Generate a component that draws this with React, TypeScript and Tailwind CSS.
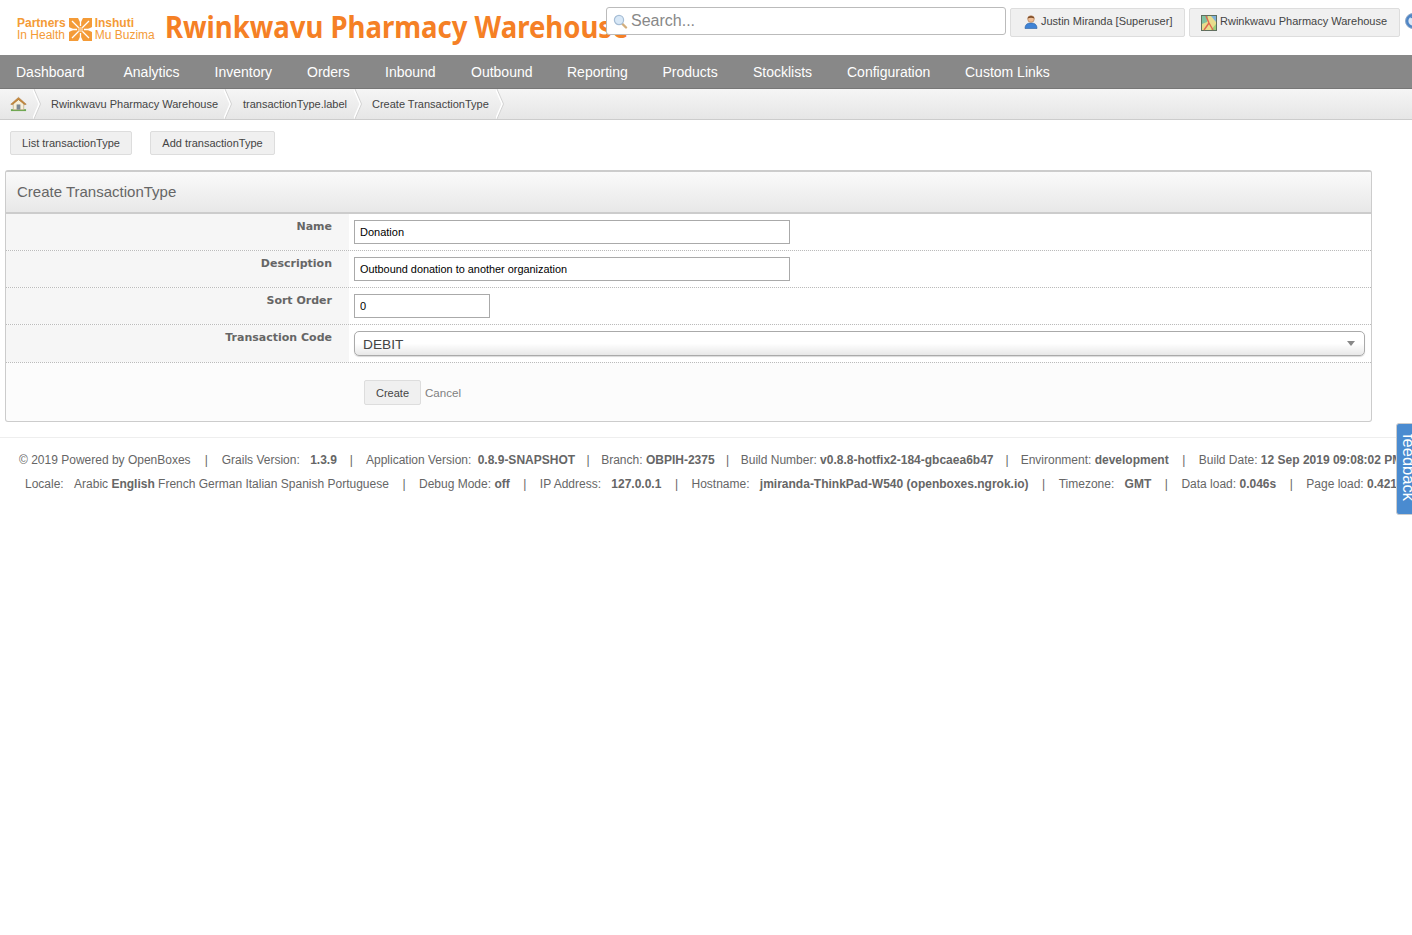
import React from 'react';

const navItems = [
  { label: 'Dashboard', width: 'w-[107.5px]' },
  { label: 'Analytics', width: 'w-[91px]' },
  { label: 'Inventory', width: 'w-[92.5px]' },
  { label: 'Orders', width: 'w-[78px]' },
  { label: 'Inbound', width: 'w-[86px]' },
  { label: 'Outbound', width: 'w-[96px]' },
  { label: 'Reporting', width: 'w-[95.5px]' },
  { label: 'Products', width: 'w-[90.5px]' },
  { label: 'Stocklists', width: 'w-[94px]' },
  { label: 'Configuration', width: 'w-[118px]' },
  { label: 'Custom Links', width: 'w-[110px]' },
];

function Chevron() {
  return (
    <svg width="10" height="30" viewBox="0 0 10 30" className="shrink-0">
      <path d="M0 0 L6.5 15 L0 30" fill="none" stroke="#fff" strokeWidth="2" />
      <path d="M1 0 L7.5 15 L1 30" fill="none" stroke="#d2d2d2" strokeWidth="1" />
    </svg>
  );
}

function HomeIcon() {
  return (
    <svg width="17" height="16" viewBox="0 0 18 16">
      <rect x="1" y="13.5" width="16" height="2" fill="#6aa84f" />
      <path d="M3.5 7 V14 H14.5 V7 L9 3 Z" fill="#f7efd9" stroke="#b9a77d" strokeWidth="0.7" />
      <path d="M0.8 8.2 L9 1 L17.2 8.2 L15.6 8.8 L9 3.4 L2.4 8.8 Z" fill="#c98a3c" stroke="#9b6424" strokeWidth="0.5" />
      <rect x="7" y="8.5" width="4" height="5.5" fill="#7c8791" />
    </svg>
  );
}

function SearchIcon() {
  return (
    <svg width="15" height="15" viewBox="0 0 15 15" className="shrink-0">
      <path d="M9 9.5 L13 13.5" stroke="#d3ae7c" strokeWidth="2.4" strokeLinecap="round" />
      <circle cx="6" cy="6" r="4.6" fill="#d8e8f7" stroke="#a6bdd5" strokeWidth="1.2" />
    </svg>
  );
}

function UserIcon() {
  return (
    <svg width="14" height="15" viewBox="0 0 14 15" className="shrink-0">
      <path d="M1 14.5 C1 10 4 9 7 9 C10 9 13 10 13 14.5 Z" fill="#3f83d6" stroke="#2a5f9f" strokeWidth="0.6" />
      <circle cx="7" cy="5" r="3.3" fill="#eebd95" stroke="#a9754d" strokeWidth="0.6" />
      <path d="M3.6 4.6 C3.6 1 10.4 1 10.4 4.6 C8.5 3.4 5.5 3.4 3.6 4.6 Z" fill="#7a4a26" />
    </svg>
  );
}

function MapIcon() {
  return (
    <svg width="16" height="16" viewBox="0 0 16 16" className="shrink-0">
      <rect x="0.5" y="0.5" width="15" height="15" fill="#e8dd8c" stroke="#5f6f5f" />
      <path d="M1 1 H7 L6 7 L1 9 Z" fill="#7fc2a0" />
      <path d="M10 1 H15 V7 Z" fill="#7fb0d8" />
      <path d="M10 15 L15 9 V15 Z" fill="#9ccf7a" />
      <path d="M5 1 L8 8 L12 15 M8 8 L3 15" stroke="#e0664f" strokeWidth="1.4" fill="none" />
    </svg>
  );
}

function GlobeIcon() {
  return (
    <svg width="16" height="16" viewBox="0 0 16 16" className="shrink-0">
      <circle cx="8" cy="8" r="7.5" fill="#4f86c6" stroke="#8fa9c9" />
      <circle cx="8" cy="8" r="4.6" fill="#dce8f5" />
      <path d="M5.5 4.5 C7.5 3.5 11 5 10 7.5 C9.2 9 7.5 8.5 8 11" fill="none" stroke="#4f86c6" strokeWidth="1.6" />
    </svg>
  );
}

function LogoMark() {
  return (
    <svg width="23" height="23" viewBox="0 0 23 23" className="shrink-0">
      <path d="M0 0 H9 L11.5 5 L14 0 H23 V9 L18 11.5 L23 14 V23 H14 L11.5 18 L9 23 H0 V14 L5 11.5 L0 9 Z" fill="#f49b37" />
      <path d="M3 3 L10 10 M20 3 L13 10 M3 20 L10 13 M20 20 L13 13 M11.5 2 V8 M11.5 15 V21 M2 11.5 H8 M15 11.5 H21" stroke="#fff" strokeWidth="1.3" />
      <circle cx="11.5" cy="11.5" r="2.6" fill="#f9c58a" />
    </svg>
  );
}

function FormRow({ label, children, tall }: { label: string; children: React.ReactNode; tall?: boolean }) {
  return (
    <div className={`flex border-b border-dotted border-[#bbb] ${tall ? 'h-[38px]' : 'h-[37px]'}`}>
      <div className="w-[343px] shrink-0 bg-[#f6f6f6] pt-[6px] pr-[17px] text-right text-[11px] leading-[14px] font-bold text-[#666]" style={{ fontFamily: '"DejaVu Sans", sans-serif' }}>
        {label}
      </div>
      <div className="flex-1 bg-white pt-[6px] pr-[6px] pl-[5px]">{children}</div>
    </div>
  );
}

// footer separators are not evenly spaced in the original
function Sep({ space = 'mx-[13.5px]' }: { space?: string }) {
  return <span className={`${space} text-[#666]`}>|</span>;
}

function Gap() {
  return <span className="inline-block w-[7px]" />;
}

export default function App() {
  return (
    <div className="relative h-[935px] w-[1412px] overflow-hidden bg-white text-[#666]" style={{ fontFamily: '"Liberation Sans", Arial, sans-serif' }}>
      {/* Header */}
      <div className="flex h-[55px] items-start">
        <div className="flex w-[165px] shrink-0 items-center pt-[17px] pl-[17px] text-[12px] leading-[12px] text-[#f49b37]">
          <div>
            <div className="font-bold">Partners</div>
            <div>In Health</div>
          </div>
          <div className="mx-[3px]">
            <LogoMark />
          </div>
          <div>
            <div className="font-bold">Inshuti</div>
            <div>Mu Buzima</div>
          </div>
        </div>
        <div className="w-[441px] shrink-0 origin-left scale-x-[0.917] pt-[6px] text-[30px] leading-[42px] font-bold whitespace-nowrap text-[#f58025]" style={{ fontFamily: '"Noto Sans", sans-serif' }}>
          Rwinkwavu Pharmacy Warehouse
        </div>
        <div className="relative mt-[7px] flex h-[28px] w-[400px] shrink-0 items-center gap-[3px] rounded-[3px] border border-[#bbb] bg-white pl-[6px] text-[16px] text-[#888]">
          <SearchIcon />
          <span>Search...</span>
        </div>
        <div className="mt-[8px] ml-[4px] flex h-[29px] w-[175px] shrink-0 items-center gap-[3px] rounded-[2px] border border-[#ddd] bg-[#f0f0f0] pb-[2px] pl-[13px] text-[11px] whitespace-nowrap text-[#444]">
          <UserIcon />
          <span>Justin Miranda [Superuser]</span>
        </div>
        <div className="mt-[8px] ml-[4px] flex h-[29px] w-[211px] shrink-0 items-center gap-[3px] rounded-[2px] border border-[#ddd] bg-[#f0f0f0] pl-[11px] text-[11px] whitespace-nowrap text-[#444]">
          <MapIcon />
          <span className="pb-[2px]">Rwinkwavu Pharmacy Warehouse</span>
        </div>
        <div className="mt-[13px] ml-[5px] shrink-0">
          <GlobeIcon />
        </div>
      </div>

      {/* Main nav */}
      <div className="flex h-[34px] items-center border-b border-[#777] bg-[#888] pt-[1px] pl-[16px] text-[14px] whitespace-nowrap text-white">
        {navItems.map((item) => (
          <div key={item.label} className={`${item.width} shrink-0`}>
            {item.label}
          </div>
        ))}
      </div>

      {/* Breadcrumb */}
      <div className="flex h-[31px] items-center border-b border-[#ccc] bg-gradient-to-b from-[#f5f5f5] to-[#e6e6e6] text-[11px] whitespace-nowrap text-[#444]">
        <div className="flex w-[33px] shrink-0 pl-[10px]">
          <HomeIcon />
        </div>
        <Chevron />
        <span className="ml-[8px] w-[173px] shrink-0">Rwinkwavu Pharmacy Warehouse</span>
        <Chevron />
        <span className="ml-[9px] w-[111px] shrink-0">transactionType.label</span>
        <Chevron />
        <span className="ml-[8px] w-[124px] shrink-0">Create TransactionType</span>
        <Chevron />
      </div>

      {/* Actions */}
      <div className="flex gap-[18px] pt-[11px] pl-[10px] text-[11px] text-[#444]">
        <div className="flex h-[24px] w-[122px] items-center justify-center rounded-[2px] border border-[#ddd] bg-[#f0f0f0]">List transactionType</div>
        <div className="flex h-[24px] w-[125px] items-center justify-center rounded-[2px] border border-[#ddd] bg-[#f0f0f0]">Add transactionType</div>
      </div>

      {/* Form panel */}
      <div className="mt-[15px] ml-[5px] h-[252px] w-[1367px] overflow-hidden rounded-[3px] border border-t-2 border-[#ccc] bg-[#fcfcfc]">
        <div className="flex h-[42px] items-center border-b-2 border-[#ccc] bg-gradient-to-b from-[#fafafa] to-[#e8e8e8] pl-[11px] text-[15px] text-[#666]">
          Create TransactionType
        </div>
        <FormRow label="Name">
          <input readOnly value="Donation" className="block h-[24px] w-[436px] border border-[#aaa] bg-white pl-[5px] text-[11px] text-black" />
        </FormRow>
        <FormRow label="Description">
          <input readOnly value="Outbound donation to another organization" className="block h-[24px] w-[436px] border border-[#aaa] bg-white pl-[5px] text-[10.9px] text-black" />
        </FormRow>
        <FormRow label="Sort Order">
          <input readOnly value="0" className="block h-[24px] w-[136px] border border-[#aaa] bg-white pl-[5px] text-[11px] text-black" />
        </FormRow>
        <FormRow label="Transaction Code" tall>
          <div className="relative h-[25px] w-[1011px] rounded-[5px] border border-[#aaa] bg-gradient-to-b from-white from-50% to-[#e8e8e8] pt-[5px] pl-[8px] text-[13.7px] leading-[16px] text-[#444] shadow-[0_1px_1px_rgba(0,0,0,0.15)]">
            DEBIT
            <span className="absolute top-[9px] right-[9px] h-0 w-0 border-x-[4px] border-t-[5px] border-x-transparent border-t-[#888]" />
          </div>
        </FormRow>
        <div className="flex items-center pt-[17px] pl-[358px] text-[11px]">
          <div className="flex h-[25px] w-[57px] items-center justify-center rounded-[2px] border border-[#ddd] bg-[#f0f0f0] pt-[1px] text-[#444]">Create</div>
          <span className="ml-[4px] pt-[1px] text-[11.6px] text-[#808080]">Cancel</span>
        </div>
      </div>

      {/* Footer */}
      <div className="mt-[15px] border-t border-[#eee] pt-[15px] text-[12px] leading-[14px] whitespace-nowrap text-[#666]">
        <div className="pl-[19px]">
          © 2019 Powered by OpenBoxes<Sep space="mx-[14px]" />Grails Version: <Gap /><b>1.3.9</b><Sep space="mx-[13px]" />Application Version: <span className="inline-block w-[3px]" /><b>0.8.9-SNAPSHOT</b><Sep space="mx-[11.5px]" />Branch: <b>OBPIH-2375</b><Sep space="mx-[11.5px]" />Build Number: <b>v0.8.8-hotfix2-184-gbcaea6b47</b><Sep space="mx-[12px]" />Environment: <b>development</b><Sep />Build Date: <b>12 Sep 2019 09:08:02 PM</b>
        </div>
        <div className="pt-[10px] pl-[25px]">
          Locale: <Gap />Arabic <b>English</b> French German Italian Spanish Portuguese<Sep />Debug Mode: <b>off</b><Sep />IP Address: <Gap /><b>127.0.0.1</b><Sep />Hostname: <Gap /><b>jmiranda-ThinkPad-W540 (openboxes.ngrok.io)</b><Sep />Timezone: <Gap /><b>GMT</b><Sep />Data load: <b>0.046s</b><Sep />Page load: <b>0.421s</b>
        </div>
      </div>

      {/* Feedback tab */}
      <div className="absolute top-[423px] left-[1396px] h-[92px] w-[24px] overflow-hidden rounded-l-[3px] border border-[#ccc] bg-[#4a8bd0]">
        <span className="absolute top-[10px] left-[3px] text-[16.5px] leading-[18px] whitespace-nowrap text-white [writing-mode:vertical-rl]">feedback</span>
      </div>
    </div>
  );
}
